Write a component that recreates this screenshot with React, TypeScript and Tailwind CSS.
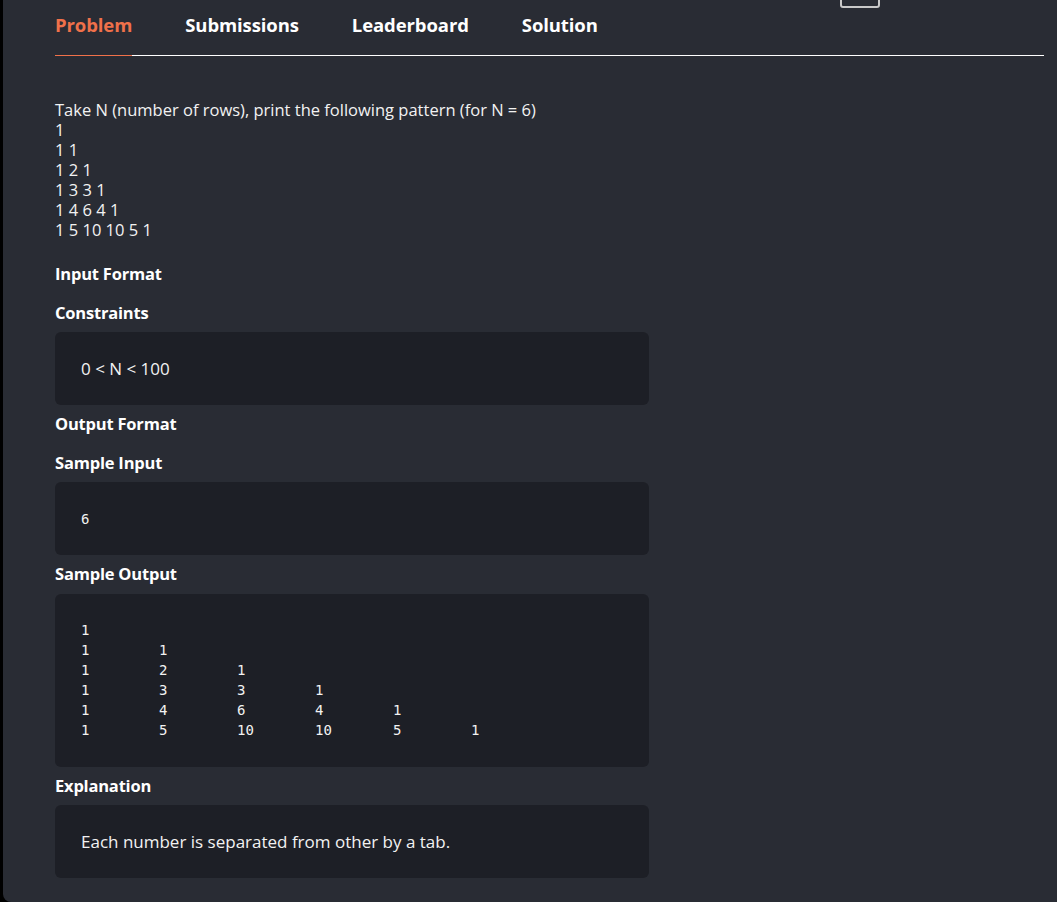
import React from 'react';

const TABS = ['Problem', 'Submissions', 'Leaderboard', 'Solution'];
const PATTERN = ['1', '1 1', '1 2 1', '1 3 3 1', '1 4 6 4 1', '1 5 10 10 5 1'];
const OUTPUT = [[1], [1, 1], [1, 2, 1], [1, 3, 3, 1], [1, 4, 6, 4, 1], [1, 5, 10, 10, 5, 1]];

const Heading = ({ children }: { children: React.ReactNode }) => (
    <h3 className="py-[9.25px] text-[16.5px] leading-[20px] font-bold text-white tracking-[-0.2px]">{children}</h3>
);

const Box = ({ children, mono }: { children: React.ReactNode; mono?: boolean }) => (
    <div
        className={`w-[594px] rounded-md bg-[#1d1f26] px-[26px] py-[26.5px] text-[#f2f2f2] leading-[20px]
            ${mono ? 'font-["DejaVu_Sans_Mono",monospace] text-[14px]' : 'text-[17px]'}`}
    >
        {children}
    </div>
);

export default function App() {
    return (
        <div className="min-h-[902px] bg-black pl-[3px] font-['Open_Sans',sans-serif]">
            <div className="relative min-h-[902px] rounded-bl-lg bg-[#292c34] pl-[52px] pr-[13px] pt-[13px] pb-[24px]">
                {/* leftover control peeking from above */}
                <div className="absolute left-[837px] top-[-4px] h-[12px] w-[40px] rounded-b-[3px] border-2 border-[#c9c9c9]" />

                {/* Tabs */}
                <div className="flex border-b border-white">
                    {TABS.map((t, i) => (
                        <div
                            key={t}
                            className={`mr-[53px] mb-[-1px] pb-[18px] text-[18.5px] leading-[24px] font-bold tracking-[-0.1px]
                                ${i === 0 ? 'border-b border-[#f0714a] text-[#f0714a]' : 'text-white'}`}
                        >
                            {t}
                        </div>
                    ))}
                </div>

                {/* Statement */}
                <div className="mt-[44px] mb-[15px] text-[16.5px] leading-[20px] text-[#f2f2f2]">
                    <p>Take N (number of rows), print the following pattern (for N = 6)</p>
                    {PATTERN.map((l) => (
                        <p key={l}>{l}</p>
                    ))}
                </div>

                <Heading>Input Format</Heading>
                <Heading>Constraints</Heading>
                <Box>0 &lt; N &lt; 100</Box>
                <Heading>Output Format</Heading>
                <Heading>Sample Input</Heading>
                <Box mono>6</Box>
                <Heading>Sample Output</Heading>
                <Box mono>
                    {OUTPUT.map((row, r) => (
                        <div key={r} className="flex">
                            {row.map((n, c) => (
                                <span key={c} className="inline-block w-[78px]">{n}</span>
                            ))}
                        </div>
                    ))}
                </Box>
                <Heading>Explanation</Heading>
                <Box>Each number is separated from other by a tab.</Box>
            </div>
        </div>
    );
}
